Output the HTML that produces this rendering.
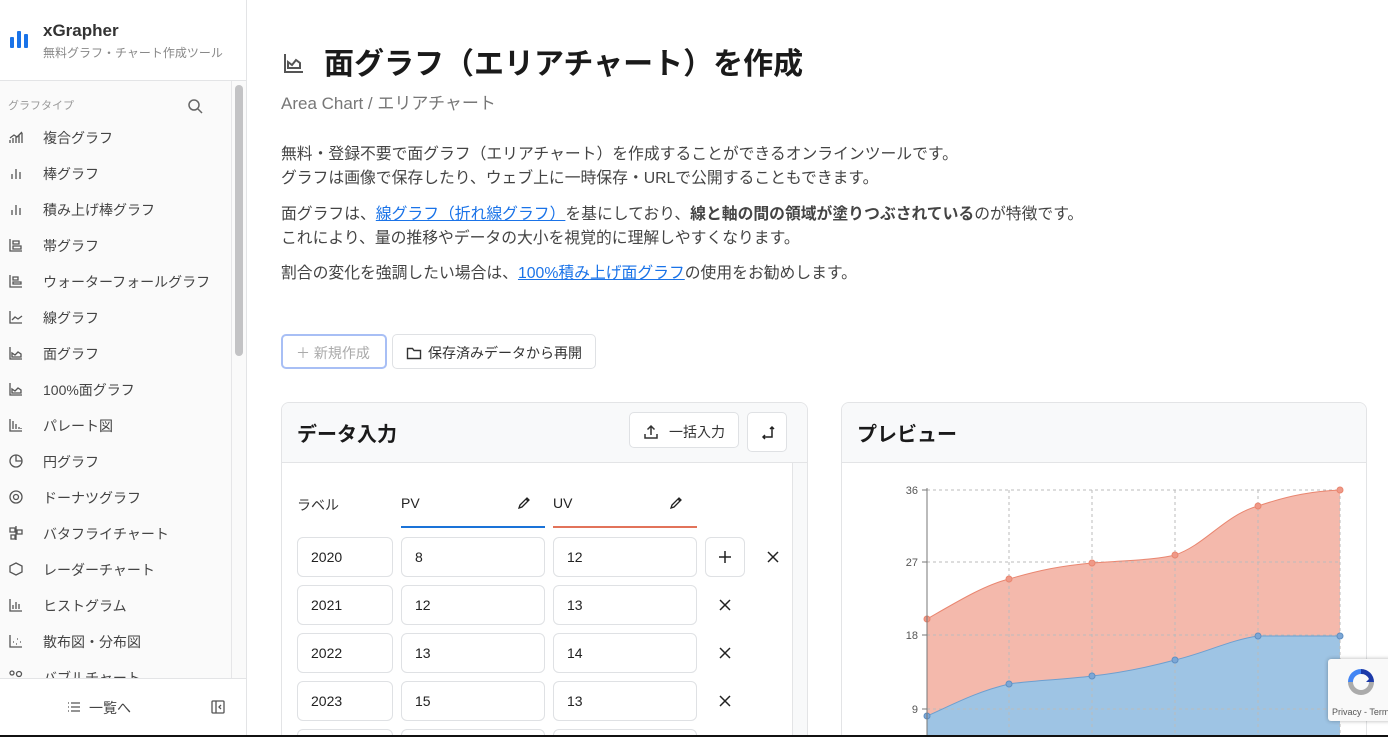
<!DOCTYPE html>
<html><head><meta charset="utf-8"><style>
*{box-sizing:border-box;margin:0;padding:0}
html,body{width:1388px;height:737px;overflow:hidden}
body{background:#fff;font-family:"Liberation Sans","Noto Sans CJK JP",sans-serif;color:#333;position:relative}
#w{position:absolute;left:0;top:0;width:1388px;height:737px;overflow:hidden}
.a{position:absolute}
.side{left:0;top:0;width:247px;height:737px;border-right:1px solid #e3e4e6;background:#fafafa}
.nav{left:0;font-size:14px;color:#444;white-space:nowrap}
.nav svg{position:absolute;left:-35px;top:1px}
.inp{position:absolute;height:40px;border:1px solid #dfe1e4;border-radius:6px;font-size:14px;color:#222;padding:11px 0 0 13px;background:#fff}
.x{position:absolute}
p{font-size:15.8px;color:#444;line-height:24px;white-space:nowrap}
a{color:#1a73e8;text-decoration:underline}
</style></head><body><div id="w">
<div class="a side"></div>
<div class="a" style="left:0;top:0;width:246px;height:81px;background:#fff;border-bottom:1px solid #e3e4e6"></div>
<svg class="a" style="left:9px;top:29px" width="20" height="20"><rect x="1" y="8" width="4" height="11" rx="1" fill="#1a73e8"/><rect x="8" y="2" width="4" height="17" rx="1" fill="#1a73e8"/><rect x="15" y="5" width="4" height="14" rx="1" fill="#1a73e8"/></svg>
<div class="a" style="left:43px;top:21px;font-size:17px;font-weight:bold;color:#333">xGrapher</div>
<div class="a" style="left:43px;top:44px;font-size:12px;color:#888">無料グラフ・チャート作成ツール</div>
<div class="a" style="left:8px;top:97px;font-size:11px;color:#999">グラフタイプ</div>
<svg class="a" style="left:187px;top:98px" width="16" height="16" fill="none" stroke="#666" stroke-width="1.5"><circle cx="7" cy="7" r="5"/><path d="M11 11l4 4"/></svg>
<div class="a" style="left:231px;top:81px;width:1px;height:597px;background:#e6e6e8"></div>
<div class="a" style="left:235px;top:85px;width:8px;height:271px;background:#c3c3c5;border-radius:4px"></div>
<div class="a" style="left:0;top:81px;width:231px;height:597px;overflow:hidden">
<div style="position:absolute;left:43px;top:0">
<div class="nav a" style="top:47px"><svg width="16" height="16" fill="none" stroke="#555" stroke-width="1.3"><path d="M2 14v-3M5 14v-5M8 14v-6M11 14v-8M14 14v-10M2 9l4-3 3 2 5-5"/></svg>複合グラフ</div>
<div class="nav a" style="top:83px"><svg width="16" height="16" stroke="#555" stroke-width="1.3"><path d="M4 14v-5M8 14v-10M12 14v-7"/></svg>棒グラフ</div>
<div class="nav a" style="top:119px"><svg width="16" height="16" stroke="#555" stroke-width="1.3"><path d="M4 14v-5M8 14v-10M12 14v-7"/></svg>積み上げ棒グラフ</div>
<div class="nav a" style="top:155px"><svg width="16" height="16" fill="none" stroke="#555" stroke-width="1.3"><path d="M2 2v12h12M5 4h6v3H5zM5 9h8v3H5z"/></svg>帯グラフ</div>
<div class="nav a" style="top:191px"><svg width="16" height="16" fill="none" stroke="#555" stroke-width="1.3"><path d="M2 2v12h12M5 4h5v3H5zM5 9h8v2H5z"/></svg>ウォーターフォールグラフ</div>
<div class="nav a" style="top:227px"><svg width="16" height="16" fill="none" stroke="#555" stroke-width="1.3"><path d="M2 2v12h12M4 11l3-3 3 2 4-3"/></svg>線グラフ</div>
<div class="nav a" style="top:263px"><svg width="16" height="16" fill="none" stroke="#555" stroke-width="1.3"><path d="M2 2v12h12M4 12V8l3 2 3-3 3 2v3z"/></svg>面グラフ</div>
<div class="nav a" style="top:299px"><svg width="16" height="16" fill="none" stroke="#555" stroke-width="1.3"><path d="M2 2v12h12M4 12V8l3 2 3-3 3 2v3z"/></svg>100%面グラフ</div>
<div class="nav a" style="top:335px"><svg width="16" height="16" fill="none" stroke="#555" stroke-width="1.3"><path d="M2 2v12h12M5 12V4M8 12V7M11 12v-2M13 12v-1"/></svg>パレート図</div>
<div class="nav a" style="top:371px"><svg width="16" height="16" fill="none" stroke="#555" stroke-width="1.3"><circle cx="8" cy="8" r="6"/><path d="M8 2v6h6"/></svg>円グラフ</div>
<div class="nav a" style="top:407px"><svg width="16" height="16" fill="none" stroke="#555" stroke-width="1.3"><circle cx="8" cy="8" r="6"/><circle cx="8" cy="8" r="2.5"/></svg>ドーナツグラフ</div>
<div class="nav a" style="top:443px"><svg width="16" height="16" fill="none" stroke="#555" stroke-width="1.3"><path d="M8 1v14M2 3h5v4H2zM9 5h5v4H9zM3 10h4v4H3z"/></svg>バタフライチャート</div>
<div class="nav a" style="top:479px"><svg width="16" height="16" fill="none" stroke="#555" stroke-width="1.3"><path d="M8 2l6 3v6l-6 3-6-3V5z"/></svg>レーダーチャート</div>
<div class="nav a" style="top:515px"><svg width="16" height="16" fill="none" stroke="#555" stroke-width="1.3"><path d="M2 2v12h12M5 12V8M8 12V5M11 12V7"/></svg>ヒストグラム</div>
<div class="nav a" style="top:551px"><svg width="16" height="16" fill="none" stroke="#555" stroke-width="1.3"><path d="M2 2v12h12M5 9h1M9 6h1M8 11h1M12 9h1"/></svg>散布図・分布図</div>
<div class="nav a" style="top:587px"><svg width="16" height="16" fill="none" stroke="#555" stroke-width="1.3"><circle cx="4" cy="4" r="2"/><circle cx="11" cy="5" r="2.5"/><circle cx="5" cy="12" r="2.5"/></svg>バブルチャート</div>
</div></div>
<div class="a" style="left:0;top:678px;width:246px;height:59px;background:#fff;border-top:1px solid #e3e4e6"></div>
<svg class="a" style="left:67px;top:700px" width="14" height="14" stroke="#555" stroke-width="1.3"><path d="M1 3h1M1 7h1M1 11h1M4 3h9M4 7h9M4 11h9"/></svg>
<div class="a" style="left:89px;top:698px;font-size:14px;color:#444">一覧へ</div>
<svg class="a" style="left:211px;top:700px" width="14" height="14" fill="none" stroke="#555" stroke-width="1.3"><rect x="1" y="1" width="12" height="12" rx="1"/><path d="M5 1v12M10 5l-2 2 2 2"/></svg>

<svg class="a" style="left:282px;top:51px" width="24" height="24" fill="none" stroke="#555" stroke-width="2"><path d="M3 3v18h18M6 17v-6l4 3 4-5 4 3v5z"/></svg>
<div class="a" style="left:324px;top:39px;font-size:30px;font-weight:bold;color:#1a1a1a;white-space:nowrap">面グラフ（エリアチャート）を作成</div>
<div class="a" style="left:281px;top:89px;font-size:17px;color:#777;white-space:nowrap">Area Chart / エリアチャート</div>
<div class="a" style="left:281px;top:143px">
<p>無料・登録不要で面グラフ（エリアチャート）を作成することができるオンラインツールです。<br>グラフは画像で保存したり、ウェブ上に一時保存・URLで公開することもできます。</p>
<p style="margin-top:12px">面グラフは、<a>線グラフ（折れ線グラフ）</a>を基にしており、<b>線と軸の間の領域が塗りつぶされている</b>のが特徴です。<br>これにより、量の推移やデータの大小を視覚的に理解しやすくなります。</p>
<p style="margin-top:11px">割合の変化を強調したい場合は、<a>100%積み上げ面グラフ</a>の使用をお勧めします。</p>
</div>
<div class="a" style="left:281px;top:334px;width:106px;height:35px;border:2px solid #a8bff5;border-radius:5px;font-size:14px;color:#aaa;padding:7px 0 0 13px">＋ 新規作成</div>
<div class="a" style="left:392px;top:334px;width:204px;height:35px;border:1px solid #dfe1e4;border-radius:5px;font-size:14px;color:#333;padding:8px 0 0 13px"><svg style="vertical-align:-3px;margin-right:6px" width="16" height="16" fill="none" stroke="#333" stroke-width="1.4"><path d="M1.5 3.5h5l1.5 2h6.5v8h-13z"/></svg>保存済みデータから再開</div>

<div class="a" style="left:281px;top:402px;width:527px;height:340px;border:1px solid #e3e4e6;border-radius:8px;overflow:hidden">
<div class="a" style="left:0;top:0;width:527px;height:60px;background:#f8f9fa;border-bottom:1px solid #e3e4e6"></div>
<div class="a" style="left:510px;top:60px;width:17px;height:300px;background:#f8f9fa;border-left:1px solid #e3e4e6"></div>
</div>
<div class="a" style="left:297px;top:418px;font-size:20px;font-weight:bold;color:#1a1a1a">データ入力</div>
<div class="a" style="left:629px;top:412px;width:110px;height:36px;border:1px solid #dfe1e4;border-radius:5px;background:#fff;font-size:14px;padding:9px 0 0 13px"><svg style="vertical-align:-3px;margin-right:10px" width="16" height="16" fill="none" stroke="#333" stroke-width="1.5"><path d="M8 11V2M4.5 5.5L8 2l3.5 3.5M2 10v4h12v-4"/></svg>一括入力</div>
<div class="a" style="left:747px;top:412px;width:40px;height:40px;border:1px solid #dfe1e4;border-radius:5px;background:#fff"><svg style="margin:12px" width="16" height="16" fill="none" stroke="#222" stroke-width="1.5"><path d="M12 2v10H3M5 10l-2 2 2 2M10 4l2-2 2 2"/></svg></div>
<div class="a" style="left:297px;top:495px;font-size:14px;color:#333">ラベル</div>
<div class="a" style="left:401px;top:495px;font-size:14px;color:#222">PV</div>
<div class="a" style="left:553px;top:495px;font-size:14px;color:#222">UV</div>
<svg class="a" style="left:516px;top:495px" width="16" height="16" fill="none" stroke="#222" stroke-width="1.3"><path d="M3 13l1-3 7-7 2 2-7 7zM10 4l2 2"/></svg>
<svg class="a" style="left:668px;top:495px" width="16" height="16" fill="none" stroke="#222" stroke-width="1.3"><path d="M3 13l1-3 7-7 2 2-7 7zM10 4l2 2"/></svg>
<div class="a" style="left:401px;top:526px;width:144px;height:2px;background:#1a73d8"></div>
<div class="a" style="left:553px;top:526px;width:144px;height:2px;background:#e2735a"></div>
<div class="inp" style="left:297px;top:537px;width:96px">2020</div><div class="inp" style="left:401px;top:537px;width:144px">8</div><div class="inp" style="left:553px;top:537px;width:144px">12</div>
<div class="inp" style="left:705px;top:537px;width:40px;padding:0"><svg style="margin:12px" width="14" height="14" stroke="#222" stroke-width="1.5"><path d="M7 1v12M1 7h12"/></svg></div>
<svg class="x" style="left:767px;top:551px" width="12" height="12" stroke="#222" stroke-width="1.5"><path d="M1 1l10 10M11 1L1 11"/></svg>
<div class="inp" style="left:297px;top:585px;width:96px">2021</div><div class="inp" style="left:401px;top:585px;width:144px">12</div><div class="inp" style="left:553px;top:585px;width:144px">13</div>
<svg class="x" style="left:719px;top:599px" width="12" height="12" stroke="#222" stroke-width="1.5"><path d="M1 1l10 10M11 1L1 11"/></svg>
<div class="inp" style="left:297px;top:633px;width:96px">2022</div><div class="inp" style="left:401px;top:633px;width:144px">13</div><div class="inp" style="left:553px;top:633px;width:144px">14</div>
<svg class="x" style="left:719px;top:647px" width="12" height="12" stroke="#222" stroke-width="1.5"><path d="M1 1l10 10M11 1L1 11"/></svg>
<div class="inp" style="left:297px;top:681px;width:96px">2023</div><div class="inp" style="left:401px;top:681px;width:144px">15</div><div class="inp" style="left:553px;top:681px;width:144px">13</div>
<svg class="x" style="left:719px;top:695px" width="12" height="12" stroke="#222" stroke-width="1.5"><path d="M1 1l10 10M11 1L1 11"/></svg>
<div class="inp" style="left:297px;top:729px;width:96px"></div><div class="inp" style="left:401px;top:729px;width:144px"></div><div class="inp" style="left:553px;top:729px;width:144px"></div>

<div class="a" style="left:841px;top:402px;width:526px;height:340px;border:1px solid #e3e4e6;border-radius:8px;overflow:hidden">
<div class="a" style="left:0;top:0;width:526px;height:60px;background:#f8f9fa;border-bottom:1px solid #e3e4e6"></div></div>
<div class="a" style="left:857px;top:418px;font-size:20px;font-weight:bold;color:#1a1a1a">プレビュー</div>
<svg class="a" style="left:842px;top:463px" width="524" height="274" font-family="Liberation Sans" font-size="11" fill="#555">
<g transform="translate(-842,-463)">
<path d="M927 619 C960 600 985 585 1009 579 C1040 570 1060 566 1092 563 C1130 560 1155 560 1175 555 C1205 545 1225 515 1258 506 C1290 495 1315 491 1340 490 L1340 636 L1258 636 C1230 640 1205 653 1175 660 C1145 668 1120 673 1092 676 C1060 680 1035 680 1009 684 C975 692 950 706 927 716 Z" fill="#f4b9ac"/>
<path d="M927 716 C950 706 975 692 1009 684 C1035 680 1060 680 1092 676 C1120 673 1145 668 1175 660 C1205 653 1230 640 1258 636 L1340 636 L1340 740 L927 740 Z" fill="#9ec4e4"/>
<g stroke="#bbb" stroke-dasharray="3,3" stroke-width="1"><path d="M927 490H1340M927 562H1340M927 635H1340M927 709H1340M1009 490V740M1092 490V740M1175 490V740M1258 490V740M1340 490V740"/></g>
<path d="M927 619 C960 600 985 585 1009 579 C1040 570 1060 566 1092 563 C1130 560 1155 560 1175 555 C1205 545 1225 515 1258 506 C1290 495 1315 491 1340 490" fill="none" stroke="#e98670" stroke-width="1"/>
<path d="M927 716 C950 706 975 692 1009 684 C1035 680 1060 680 1092 676 C1120 673 1145 668 1175 660 C1205 653 1230 640 1258 636 L1340 636" fill="none" stroke="#6d9fcf" stroke-width="1"/>
<g fill="#ef9988" stroke="#e98670"><circle cx="927" cy="619" r="3"/><circle cx="1009" cy="579" r="3"/><circle cx="1092" cy="563" r="3"/><circle cx="1175" cy="555" r="3"/><circle cx="1258" cy="506" r="3"/><circle cx="1340" cy="490" r="3"/></g>
<g fill="#7ca7d6" stroke="#5f8fc2"><circle cx="927" cy="716" r="3"/><circle cx="1009" cy="684" r="3"/><circle cx="1092" cy="676" r="3"/><circle cx="1175" cy="660" r="3"/><circle cx="1258" cy="636" r="3"/><circle cx="1340" cy="636" r="3"/></g>
<path d="M927 488V740M922 490H927M922 562H927M922 635H927M922 709H927" stroke="#777"/>
<text x="918" y="494" text-anchor="end">36</text><text x="918" y="566" text-anchor="end">27</text><text x="918" y="639" text-anchor="end">18</text><text x="918" y="713" text-anchor="end">9</text>
</g></svg>
<div class="a" style="left:1328px;top:659px;width:64px;height:62px;background:#f9f9f9;border-radius:3px;box-shadow:0 0 4px rgba(0,0,0,.3)">
<svg style="position:absolute;left:16px;top:6px" width="34" height="34"><path d="M17 4a13 13 0 0 1 13 13h-8l3-3a8 8 0 0 0-8-5z" fill="#1c3aa9"/><path d="M4 17A13 13 0 0 1 17 4v5a8 8 0 0 0-8 8z" fill="#4285f4"/><path d="M4 17h5a8 8 0 0 0 16 0h5a13 13 0 0 1-26 0z" fill="#ababab"/></svg>
<div style="position:absolute;left:4px;top:48px;font-size:9px;color:#555;white-space:nowrap">Privacy - Terms</div></div>
<div class="a" style="left:0;top:735px;width:1388px;height:2px;background:#111"></div>
</div></body></html>
